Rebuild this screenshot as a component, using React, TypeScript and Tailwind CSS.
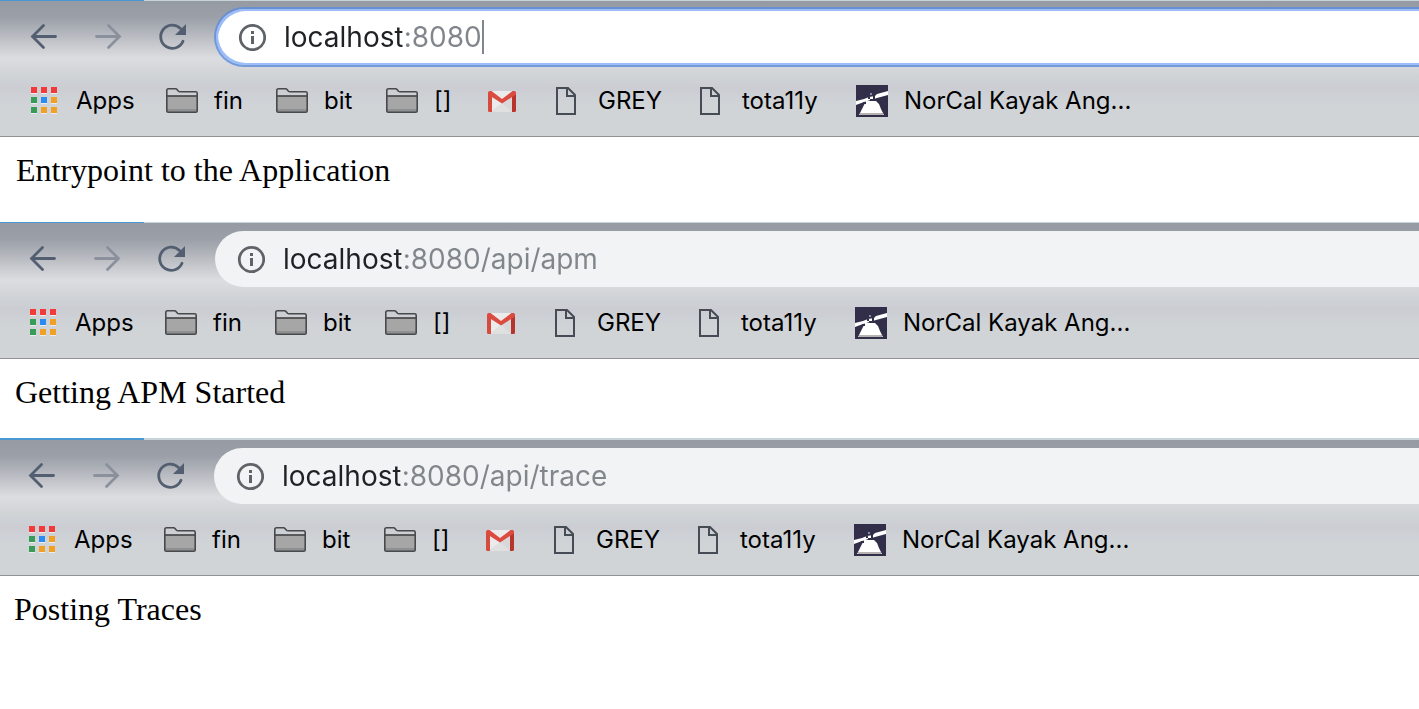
import React from "react";

type Panel = {
  host: string;
  path: string;
  body: string;
  focused?: boolean;
  height: string;
  toolbar: string;
  bookmarks: string;
  content: string;
  strip: string;
};

const panels: Panel[] = [
  {
    host: "localhost",
    path: ":8080",
    body: "Entrypoint to the Application",
    focused: true,
    height: "min-h-[222px]",
    toolbar: "pl-7",
    bookmarks: "pl-7",
    content: "pl-4",
    strip: "h-px",
  },
  {
    host: "localhost",
    path: ":8080/api/apm",
    body: "Getting APM Started",
    height: "min-h-[216px]",
    toolbar: "pl-[27px]",
    bookmarks: "pl-[27px]",
    content: "pl-[15px]",
    strip: "h-px",
  },
  {
    host: "localhost",
    path: ":8080/api/trace",
    body: "Posting Traces",
    height: "min-h-[216px]",
    toolbar: "pl-[26px]",
    bookmarks: "pl-[26px]",
    content: "pl-[14px]",
    strip: "h-[2px]",
  },
];

function BackIcon() {
  return (
    <svg viewBox="0 0 32 32" className="size-8" fill="none" stroke="#535f70" strokeWidth="2.8" strokeLinecap="round">
      <path d="M27.500 15.500H5M15.500 4.500L4.500 15.500L15.500 26.500" />
    </svg>
  );
}

function ForwardIcon() {
  return (
    <svg viewBox="0 0 32 32" className="size-8" fill="none" stroke="#8a919d" strokeWidth="2.8" strokeLinecap="round">
      <path d="M4.500 15.500H27M16.500 4.500L27.500 15.500L16.500 26.500" />
    </svg>
  );
}

function ReloadIcon() {
  return (
    <svg viewBox="0 0 32 32" className="size-8" fill="none">
      <path d="M27 20.200A11.600 11.600 0 1 1 24.500 7.500" stroke="#535f70" strokeWidth="2.8" strokeLinecap="round" />
      <path d="M30 3V14H19Z" fill="#535f70" />
    </svg>
  );
}

function InfoIcon() {
  return (
    <svg viewBox="0 0 28 28" className="size-7 shrink-0" fill="none">
      <circle cx="14.500" cy="14.500" r="12.200" stroke="#5f6368" strokeWidth="2.800" />
      <path d="M13 8H16V11H13ZM13 13H16V21H13Z" fill="#5f6368" />
    </svg>
  );
}

function AppsIcon() {
  const colors = ["#f33a3a", "#f33a3a", "#f33a3a", "#369c58", "#2a8cf3", "#f0a024", "#369c58", "#f0a024", "#f0a024"];
  return (
    <svg viewBox="0 0 32 32" className="size-8" shapeRendering="crispEdges">
      {colors.map((c, i) => {
        const x = 3 + (i % 3) * 10;
        const y = 2 + Math.floor(i / 3) * 10;
        return (
          <g key={i}>
            <rect x={x} y={y + 1} width="6" height="6" fill="#ebecee" />
            <rect x={x} y={y} width="6" height="6" fill={c} />
          </g>
        );
      })}
    </svg>
  );
}

function FolderIcon() {
  return (
    <svg viewBox="0 0 32 32" className="size-8" fill="none">
      <path d="M1 11H31V26.500H1Z" fill="#a6a6a7" />
      <path d="M1 24H31V27H1Z" fill="#8f9091" />
      <path
        d="M0.800 5.500Q0.800 3.800 2.500 3.800H9.500Q10.500 3.800 11.200 4.700L12.500 6.300Q13 6.800 14 6.800H29.700Q31.200 6.800 31.200 8.300V26Q31.200 27.300 29.700 27.300H2.300Q0.800 27.300 0.800 26Z"
        stroke="#48494b"
        strokeWidth="1.600"
      />
      <path d="M1 11H31" stroke="#48494b" strokeWidth="1.700" />
    </svg>
  );
}

function MailIcon() {
  return (
    <svg viewBox="0 0 32 32" className="size-8">
      <path d="M4 6H28V27H4Z" fill="#ebebeb" />
      <path d="M4 27L16 18L28 27Z" fill="#e0e0e0" />
      <path d="M16 18L26 27V12Z" fill="#d8d8d8" />
      <path d="M2 8.500Q2 6 4.500 6L6 7V27H3.500Q2 27 2 25.500Z" fill="#d54b3e" />
      <path d="M30 8.500Q30 6 27.500 6L26 7V27H28.500Q30 27 30 25.500Z" fill="#b7352c" />
      <path d="M2 8.500Q2 6 4.500 6H5.500L16 14L26.500 6H27.500Q30 6 30 8.500V9.500L16 18.500L2 9.500Z" fill="#dc4b40" />
    </svg>
  );
}

function FileIcon() {
  return (
    <svg viewBox="0 0 32 32" className="size-8" fill="none" stroke="#454c55" strokeWidth="2">
      <path d="M7 3H18L25 10V29H7ZM17 3V11H25" />
    </svg>
  );
}

function KayakIcon() {
  return (
    <svg viewBox="0 0 32 32" className="size-8">
      <rect width="32" height="32" fill="#302e49" />
      <path
        d="M4 4h2v2H4zM12 2h2v2h-2zM22 4h2v2h-2zM6 10h2v2H6zM28 18h2v2h-2zM28 26h2v2h-2zM2 24h2v2H2z"
        fill="#402c45"
      />
      <path d="M0 16L8 14L13 12L19 11L21 9L32 6V10L21 13L8 17L0 20Z" fill="#fff" />
      <path d="M10 16H20L23 19L25 24L28 30H3L6 24L8 20Z" fill="#fff" />
      <path d="M12 12h2v2h-2zM17 11h2v3h-2zM14 14h3v2h-3zM7 17h3v2H7z" fill="#302e49" />
      <path d="M14 8h2v2h-2z" fill="#8d8a9c" />
      <path d="M4 28H27V30H4Z" fill="#b7b2b1" />
    </svg>
  );
}

const bookmarks = [
  { label: "Apps", icon: AppsIcon, width: "w-[138px]" },
  { label: "fin", icon: FolderIcon, width: "w-[110px]" },
  { label: "bit", icon: FolderIcon, width: "w-[110px]" },
  { label: "[]", icon: FolderIcon, width: "w-[100px]" },
  { label: "", icon: MailIcon, width: "w-16" },
  { label: "GREY", icon: FileIcon, width: "w-36" },
  { label: "tota11y", icon: FileIcon, width: "w-[162px]" },
  { label: "NorCal Kayak Ang...", icon: KayakIcon, width: "" },
];

function BrowserPanel({ panel }: { panel: Panel }) {
  return (
    <section className={`flex flex-col bg-white ${panel.height}`}>
      <div className={`flex shrink-0 ${panel.strip}`}>
        <div className="w-36 bg-[#4a98d2]" />
        <div className="grow bg-[#c8d3d9]" />
      </div>
      <header className="shrink-0 border-b border-[#919296] bg-[linear-gradient(#959aa3_0px,#9ba0a8_16px,#a9adb4_26px,#c4c6cb_42px,#dcdde1_57px,#d6d7db_67px,#cfd3d6_75px,#cbcdd3_87px,#d0d4d7_104px,#d0d4d7_135px)]">
        <div className={`flex items-center ${panel.toolbar} ${panel.focused ? "pt-[6px]" : "pt-2"}`}>
          <nav aria-label="Navigation" className={`flex shrink-0 gap-8 ${panel.focused ? "w-[186px]" : "w-[188px]"}`}>
            <button type="button" aria-label="Back"><BackIcon /></button>
            <button type="button" aria-label="Forward"><ForwardIcon /></button>
            <button type="button" aria-label="Reload"><ReloadIcon /></button>
          </nav>
          <label
            className={`flex grow items-center rounded-l-full ${
              panel.focused
                ? "h-[60px] border-y-2 border-l-2 border-[#5c8cdc]/80 bg-white bg-clip-padding pl-[22px] shadow-[inset_2px_2px_0_#9dbdf8,inset_2px_-2px_0_#9dbdf8]"
                : "h-14 bg-[#f1f3f4] pl-[22px]"
            }`}
          >
            <InfoIcon />
            <input
              type="text"
              aria-label="Address"
              defaultValue={panel.host + panel.path}
              className="ml-[18px] field-sizing-content bg-linear-to-r from-[#202124] from-[118px] to-[#80868b] to-[118px] bg-clip-text font-['Inter','Roboto',sans-serif] text-[28px] leading-9 text-transparent outline-none"
            />
            {panel.focused && <span className="h-[34px] w-[2px] bg-[#80868b]" />}
          </label>
        </div>
        <nav
          aria-label="Bookmarks"
          className={`flex items-center ${panel.bookmarks} ${panel.focused ? "h-[69px] pb-[2px]" : "h-[71px]"}`}
        >
          {bookmarks.map(({ label, icon: Icon, width }, i) => (
            <a
              key={i}
              href="#"
              aria-label={label || "Gmail"}
              className={`flex shrink-0 items-center gap-4 font-['Inter','Roboto',sans-serif] text-2xl text-black ${width}`}
            >
              <Icon />
              {label && <span className="whitespace-nowrap">{label}</span>}
            </a>
          ))}
        </nav>
      </header>
      <main className={`pt-[15px] font-['Liberation_Serif',serif] text-[32px] leading-9 text-black ${panel.content}`}>
        <p>{panel.body}</p>
      </main>
    </section>
  );
}

export default function App() {
  return (
    <div className="min-h-screen overflow-x-hidden bg-white">
      {panels.map((panel) => (
        <BrowserPanel key={panel.path} panel={panel} />
      ))}
    </div>
  );
}
